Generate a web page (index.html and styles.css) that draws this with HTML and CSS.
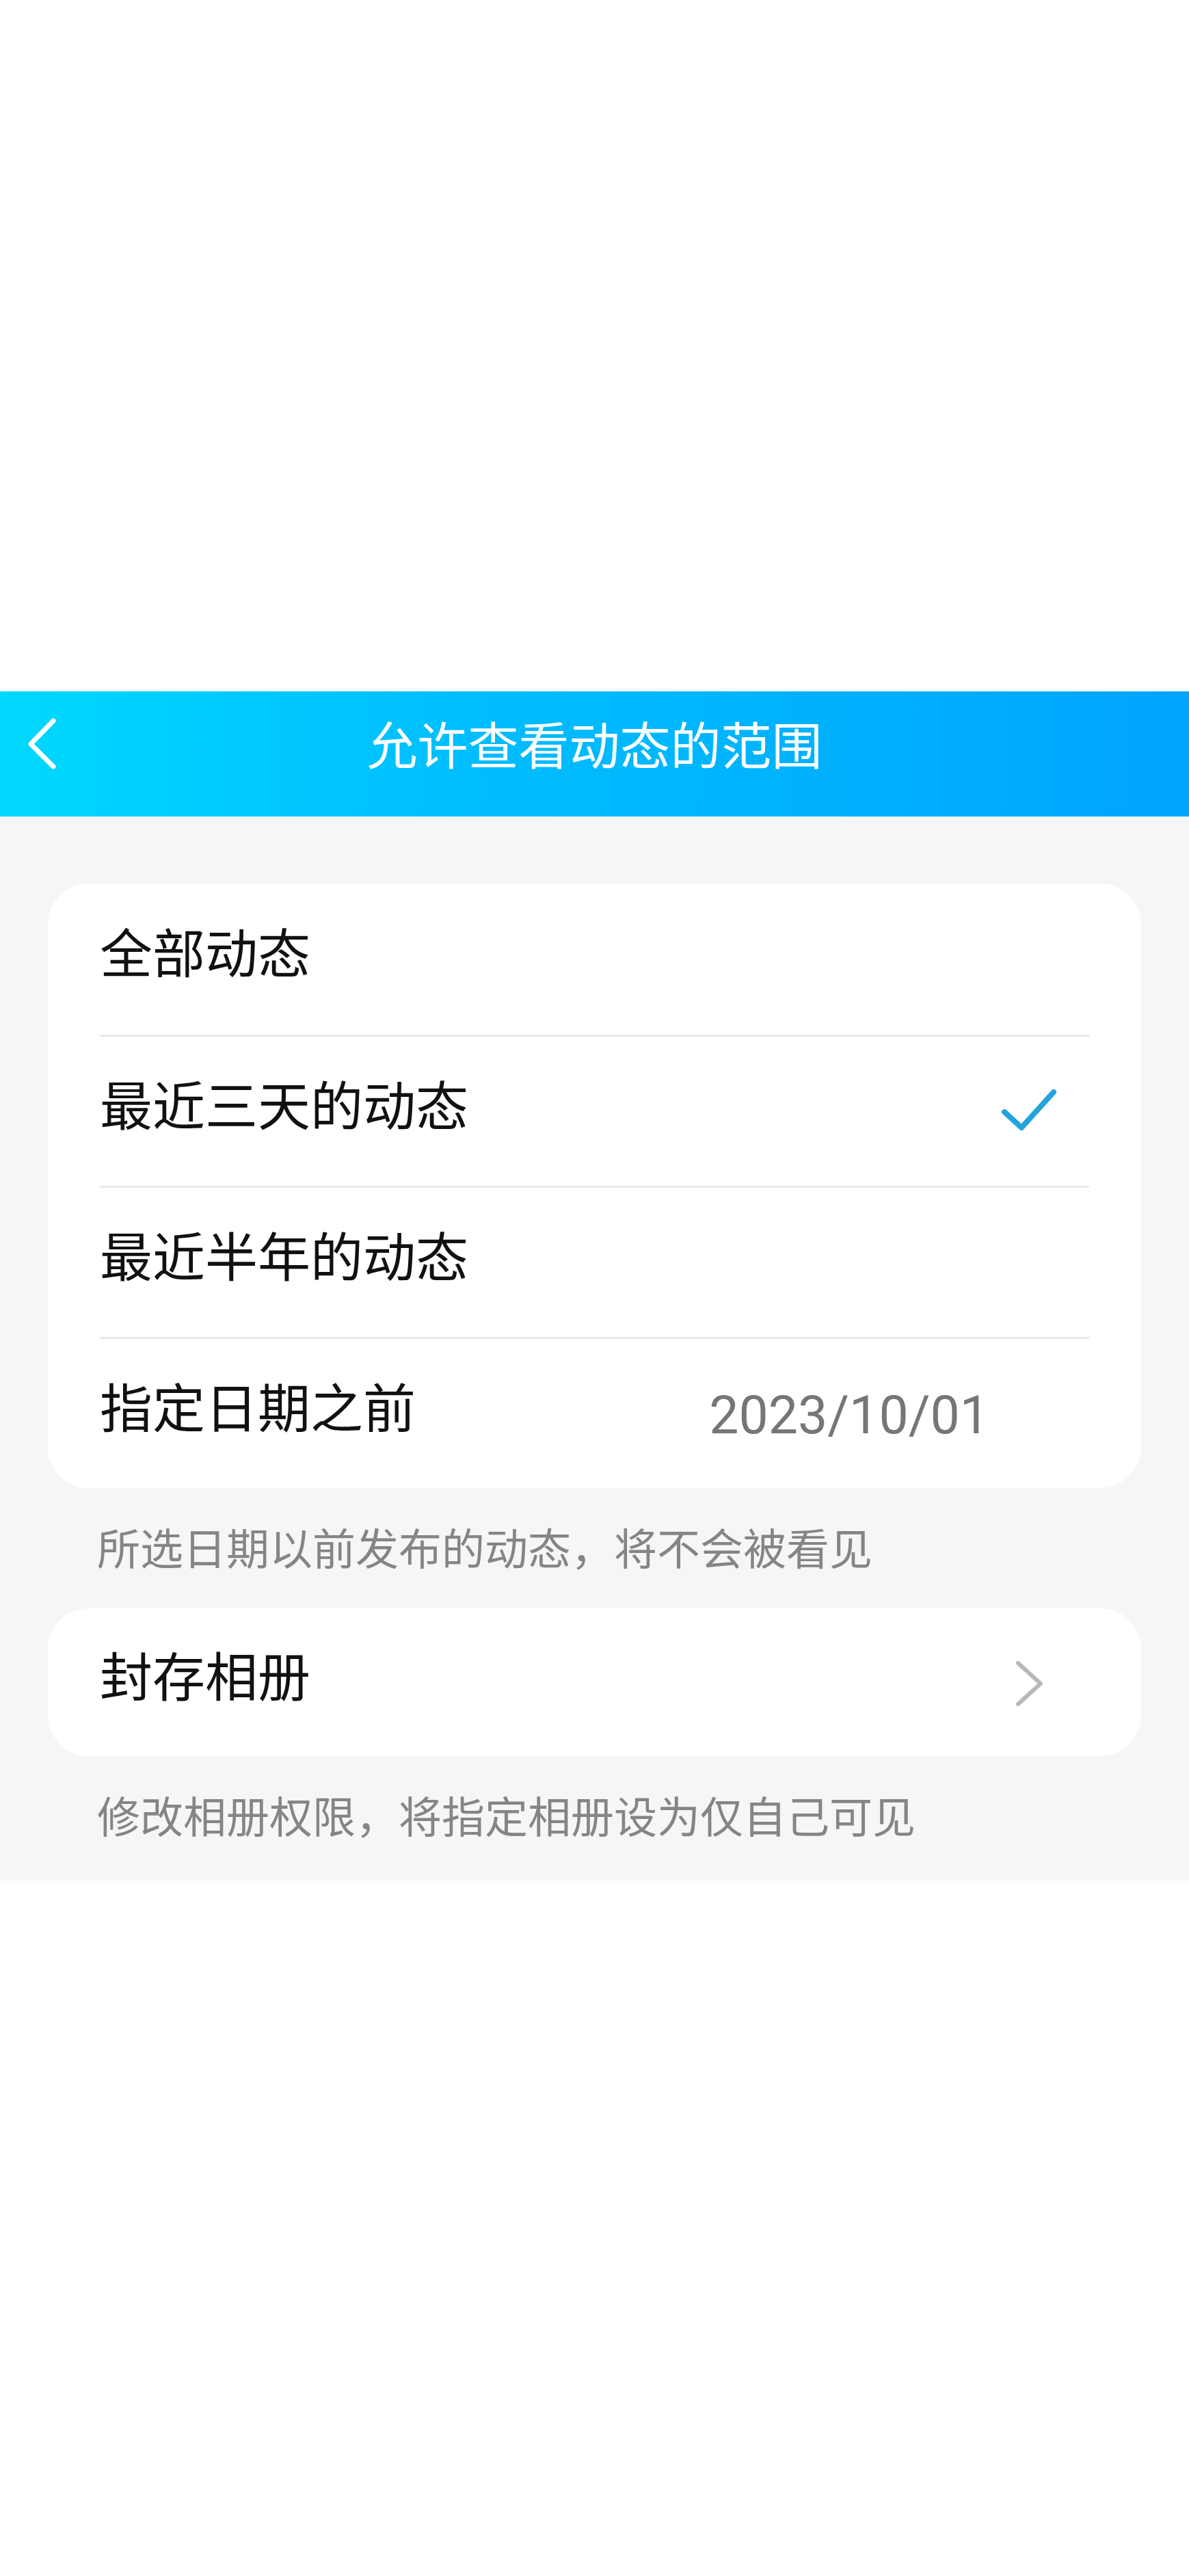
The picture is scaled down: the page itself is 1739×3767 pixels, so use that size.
FILE: index.html
```html
<!DOCTYPE html>
<html lang="zh-CN">
  <head>
    <meta charset="UTF-8" />
    <meta name="viewport" content="width=device-width, initial-scale=1.0" />
    <title>允许查看动态的范围</title>
    <link rel="stylesheet" href="styles.css">
  </head>
  <body>
    <div class="top-blank"></div>

    <header class="navbar">
      <a href="#" class="nav-back" aria-label="返回">
        <svg width="50" height="80" viewBox="0 0 50 80">
          <polyline points="37,9 4,43 37,76" fill="none" stroke="#ffffff" stroke-width="7" stroke-linecap="round" stroke-linejoin="round" />
        </svg>
      </a>
      <h1 class="nav-title">允许查看动态的范围</h1>
    </header>

    <main class="content">
      <section class="card">
        <div class="row">
          <span class="row-label">全部动态</span>
        </div>
        <div class="row">
          <span class="row-label">最近三天的动态</span>
          <svg class="check-icon" width="90" height="75" viewBox="0 0 90 75">
            <polyline points="10,40 35,63 82,11" fill="none" stroke="#24a4dc" stroke-width="8" stroke-linecap="round" stroke-linejoin="round" />
          </svg>
        </div>
        <div class="row">
          <span class="row-label">最近半年的动态</span>
        </div>
        <div class="row">
          <span class="row-label">指定日期之前</span>
          <span class="row-value">2023/10/01</span>
        </div>
      </section>
      <p class="hint">所选日期以前发布的动态，将不会被看见</p>

      <section class="card">
        <div class="row row-single">
          <span class="row-label">封存相册</span>
          <svg class="arrow-icon" width="53" height="80" viewBox="0 0 53 80">
            <polyline points="10,10 43,40 10,70" fill="none" stroke="#b8b8b8" stroke-width="6" stroke-linecap="round" stroke-linejoin="round" />
          </svg>
        </div>
      </section>
      <p class="hint">修改相册权限，将指定相册设为仅自己可见</p>
    </main>
  </body>
</html>
```

FILE: styles.css
```css
* {
  margin: 0;
  padding: 0;
  box-sizing: border-box;
}

body {
  font-family: "Noto Sans CJK SC", "Noto Sans", sans-serif;
  background: #ffffff;
  min-height: 3767px;
}

.top-blank {
  height: 1011px;
}

/* barre du haut */
.navbar {
  position: relative;
  height: 183px;
  display: flex;
  align-items: center;
  justify-content: center;
  padding-bottom: 33px;
  background: linear-gradient(90deg, #00d8ff 0%, #00bdff 40%, #00a5fd 100%);
}

.nav-back {
  position: absolute;
  left: 41px;
  top: 34px;
  display: flex;
}

.nav-title {
  color: #ffffff;
  font-size: 74px;
  font-weight: normal;
  line-height: 1;
}

.content {
  background: #f5f6f8;
  padding: 98px 70px 6px;
}

.card {
  background: #ffffff;
  border-radius: 60px;
  padding: 0 76px 0 76px;
}

.row {
  height: 221px;
  display: flex;
  align-items: center;
  padding-bottom: 26px;
}

.row + .row {
  border-top: 3px solid #e8eaee;
}

.row-single {
  height: 216px;
}

.row-label {
  flex: 1;
  font-size: 77px;
  line-height: 1;
  color: #111111;
}

.row-value {
  font-family: Roboto, "Liberation Sans", sans-serif;
  font-size: 77px;
  line-height: 1;
  color: #767676;
  margin-top: 32px;
  margin-right: 146px;
}

.check-icon {
  margin-top: 23px;
  margin-right: 44px;
}

.arrow-icon {
  margin-top: 30px;
  margin-right: 61px;
}

.hint {
  height: 176px;
  display: flex;
  align-items: center;
  padding: 0 0 8px 72px;
  font-size: 63px;
  line-height: 1;
  color: #858585;
}
```
